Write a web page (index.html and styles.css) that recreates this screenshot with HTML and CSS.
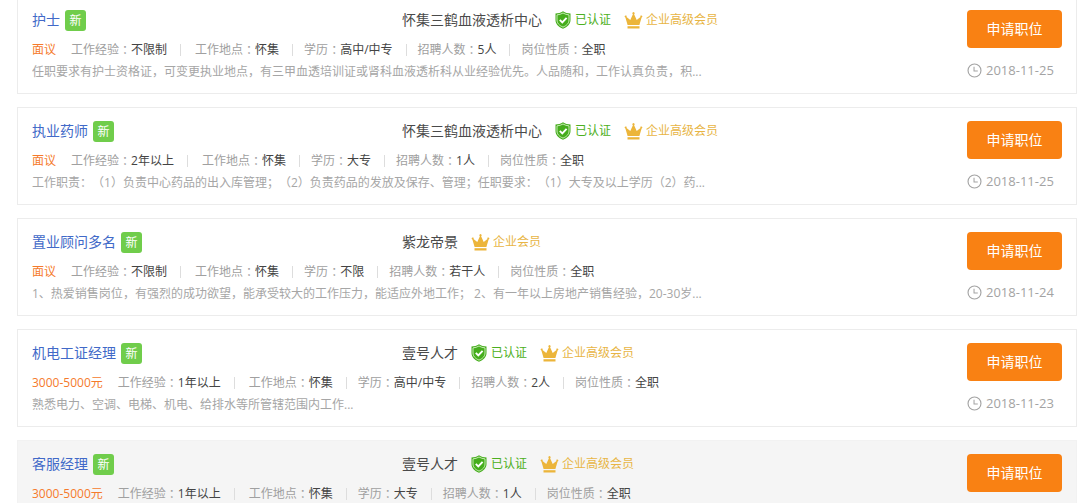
FILE: index.html
```html
<!DOCTYPE html>
<html lang="zh-CN">
<head>
<meta charset="utf-8">
<title>招聘职位</title>
<link rel="stylesheet" href="styles.css">
</head>
<body>
<svg class="sprite" aria-hidden="true">
  <symbol id="shield" viewBox="0 0 16 18">
    <path d="M8 .3C5.800 1.800 3.200 2.500.5 2.600V9c0 4 3 7 7.500 8.700C12.500 16 15.500 13 15.500 9V2.600C12.800 2.500 10.200 1.800 8 .3z" fill="#45ad1c"/>
    <path d="M8 2C6.200 3.100 4.200 3.700 2 3.900V9c0 3.200 2.400 5.600 6 7.100 3.600-1.500 6-3.900 6-7.100V3.900C11.800 3.700 9.800 3.100 8 2z" fill="none" stroke="#d4f0c4" stroke-width=".9"/>
    <path d="M4.800 8.900l2.500 2.500 4.300-4.600" fill="none" stroke="#fff" stroke-width="1.900"/>
  </symbol>
  <symbol id="crown" viewBox="0 0 19 17">
    <path d="M3.600 13L1.400 5.400A1 1 0 1 1 2.500 5L6.300 8 8.900 2.200A1.100 1.100 0 1 1 10.100 2.200L12.700 8l3.800-3a1 1 0 1 1 1.100.4L15.400 13z" fill="#ecb53a"/>
    <path d="M3.500 14.200h12v2.300h-12z" fill="#ecb53a"/>
  </symbol>
  <symbol id="clock" viewBox="0 0 16 16">
    <circle cx="8" cy="8" r="6.900" fill="none" stroke="#a3a3a3" stroke-width="1.200"/>
    <path d="M7.500 4v4.500h4" fill="none" stroke="#a3a3a3" stroke-width="1.100"/>
  </symbol>
</svg>
<main class="jobs">
  <article class="job">
    <div class="job-body">
      <div class="job-head">
        <div class="job-name"><a href="#">护士</a><span class="badge">新</span></div>
        <div class="company"><a href="#">怀集三鹤血液透析中心</a><span class="tag verified"><svg class="shield"><use href="#shield"/></svg>已认证</span><span class="tag member"><svg class="crown"><use href="#crown"/></svg>企业高级会员</span></div>
      </div>
      <ul class="meta">
        <li class="pay">面议</li>
        <li>工作经验<i>：</i><b>不限制</b></li>
        <li>工作地点<i>：</i><b>怀集</b></li>
        <li>学历<i>：</i><b>高中/中专</b></li>
        <li>招聘人数<i>：</i><b>5人</b></li>
        <li>岗位性质<i>：</i><b>全职</b></li>
      </ul>
      <p class="summary">任职要求有护士资格证<i>，</i>可变更执业地点<i>，</i>有三甲血透培训证或肾科血液透析科从业经验优先。人品随和<i>，</i>工作认真负责<i>，</i>积...</p>
    </div>
    <div class="job-side">
      <button class="apply" type="button">申请职位</button>
      <time class="date"><svg class="clock"><use href="#clock"/></svg>2018-11-25</time>
    </div>
  </article>

  <article class="job">
    <div class="job-body">
      <div class="job-head">
        <div class="job-name"><a href="#">执业药师</a><span class="badge">新</span></div>
        <div class="company"><a href="#">怀集三鹤血液透析中心</a><span class="tag verified"><svg class="shield"><use href="#shield"/></svg>已认证</span><span class="tag member"><svg class="crown"><use href="#crown"/></svg>企业高级会员</span></div>
      </div>
      <ul class="meta">
        <li class="pay">面议</li>
        <li>工作经验<i>：</i><b>2年以上</b></li>
        <li>工作地点<i>：</i><b>怀集</b></li>
        <li>学历<i>：</i><b>大专</b></li>
        <li>招聘人数<i>：</i><b>1人</b></li>
        <li>岗位性质<i>：</i><b>全职</b></li>
      </ul>
      <p class="summary">工作职责<i>：</i>（1）负责中心药品的出入库管理<i>；</i>（2）负责药品的发放及保存、管理<i>；</i>任职要求<i>：</i>（1）大专及以上学历（2）药...</p>
    </div>
    <div class="job-side">
      <button class="apply" type="button">申请职位</button>
      <time class="date"><svg class="clock"><use href="#clock"/></svg>2018-11-25</time>
    </div>
  </article>

  <article class="job">
    <div class="job-body">
      <div class="job-head">
        <div class="job-name"><a href="#">置业顾问多名</a><span class="badge">新</span></div>
        <div class="company"><a href="#">紫龙帝景</a><span class="tag member"><svg class="crown"><use href="#crown"/></svg>企业会员</span></div>
      </div>
      <ul class="meta">
        <li class="pay">面议</li>
        <li>工作经验<i>：</i><b>不限制</b></li>
        <li>工作地点<i>：</i><b>怀集</b></li>
        <li>学历<i>：</i><b>不限</b></li>
        <li>招聘人数<i>：</i><b>若干人</b></li>
        <li>岗位性质<i>：</i><b>全职</b></li>
      </ul>
      <p class="summary">1、热爱销售岗位<i>，</i>有强烈的成功欲望<i>，</i>能承受较大的工作压力<i>，</i>能适应外地工作<i>；</i> 2、有一年以上房地产销售经验<i>，</i>20-30岁...</p>
    </div>
    <div class="job-side">
      <button class="apply" type="button">申请职位</button>
      <time class="date"><svg class="clock"><use href="#clock"/></svg>2018-11-24</time>
    </div>
  </article>

  <article class="job">
    <div class="job-body">
      <div class="job-head">
        <div class="job-name"><a href="#">机电工证经理</a><span class="badge">新</span></div>
        <div class="company"><a href="#">壹号人才</a><span class="tag verified"><svg class="shield"><use href="#shield"/></svg>已认证</span><span class="tag member"><svg class="crown"><use href="#crown"/></svg>企业高级会员</span></div>
      </div>
      <ul class="meta">
        <li class="pay">3000-5000元</li>
        <li>工作经验<i>：</i><b>1年以上</b></li>
        <li>工作地点<i>：</i><b>怀集</b></li>
        <li>学历<i>：</i><b>高中/中专</b></li>
        <li>招聘人数<i>：</i><b>2人</b></li>
        <li>岗位性质<i>：</i><b>全职</b></li>
      </ul>
      <p class="summary">熟悉电力、空调、电梯、机电、给排水等所管辖范围内工作...</p>
    </div>
    <div class="job-side">
      <button class="apply" type="button">申请职位</button>
      <time class="date"><svg class="clock"><use href="#clock"/></svg>2018-11-23</time>
    </div>
  </article>

  <article class="job active">
    <div class="job-body">
      <div class="job-head">
        <div class="job-name"><a href="#">客服经理</a><span class="badge">新</span></div>
        <div class="company"><a href="#">壹号人才</a><span class="tag verified"><svg class="shield"><use href="#shield"/></svg>已认证</span><span class="tag member"><svg class="crown"><use href="#crown"/></svg>企业高级会员</span></div>
      </div>
      <ul class="meta">
        <li class="pay">3000-5000元</li>
        <li>工作经验<i>：</i><b>1年以上</b></li>
        <li>工作地点<i>：</i><b>怀集</b></li>
        <li>学历<i>：</i><b>大专</b></li>
        <li>招聘人数<i>：</i><b>1人</b></li>
        <li>岗位性质<i>：</i><b>全职</b></li>
      </ul>
    </div>
    <div class="job-side">
      <button class="apply" type="button">申请职位</button>
    </div>
  </article>
</main>
</body>
</html>
```
FILE: styles.css
```css
* {
  box-sizing: border-box;
}

body {
  margin: 0;
  background: #fff;
  color: #a0a0a0;
  font: 12px/22px "Open Sans", "Noto Sans CJK SC", sans-serif;
}

a {
  text-decoration: none;
}

.sprite {
  display: none;
}

.jobs {
  display: flex;
  flex-direction: column;
  gap: 13px;
  margin: -4px 3px 0 17px;
}

.job {
  display: flex;
  justify-content: space-between;
  padding: 11px 14px 10px;
  border: 1px solid #ececec;
}

.job.active {
  background: #f5f5f5;
  border-color: #f2f2f2;
}

.job-body {
  flex: 1;
  min-width: 0;
}

.job-head {
  display: grid;
  grid-template-columns: 370px 1fr;
  margin-bottom: 7px;
  font-size: 14px;
  line-height: 24px;
}

.job-name,
.company,
.tag,
.meta,
.date {
  display: flex;
  align-items: center;
}

.job-name {
  gap: 5px;
}

.job-name a {
  color: #4169c8;
}

.badge {
  width: 21px;
  height: 21px;
  border-radius: 3px;
  background: #70cd4b;
  color: #fff;
  font-size: 12px;
  line-height: 21px;
  text-align: center;
}

.company {
  gap: 13px;
}

.company a {
  color: #4a4a4a;
}

.tag {
  font-size: 12px;
}

.verified {
  gap: 4px;
  color: #4caf20;
}

.member {
  gap: 3px;
  color: #e8b545;
}

.shield {
  width: 16px;
  height: 18px;
}

.crown {
  width: 19px;
  height: 17px;
}

.meta {
  margin: 0;
  padding: 0;
  list-style: none;
}

.meta li {
  display: flex;
  align-items: center;
}

.meta li:not(.pay, :last-child)::after {
  content: "";
  width: 1px;
  height: 12px;
  margin: 0 11px 0 13px;
  background: #ddd;
}

.meta li:nth-child(2)::after {
  margin-right: 14px;
}

.meta .pay {
  margin-right: 15px;
  color: #f57a2c;
}

.meta b {
  color: #444;
  font-weight: 400;
}

.meta i,
.summary i {
  font-family: "Noto Sans CJK TC", sans-serif;
  font-style: normal;
  line-height: 20px;
}

.summary {
  margin: 0;
  overflow: hidden;
  color: #a6a6a6;
  text-overflow: ellipsis;
  text-spacing-trim: space-all;
  white-space: nowrap;
}

.job-side {
  width: 95px;
  padding-top: 2px;
}

.apply {
  display: block;
  width: 100%;
  height: 38px;
  padding: 0;
  border: 0;
  border-radius: 4px;
  background: #f98113;
  color: #fff;
  font: 14px/38px "Open Sans", "Noto Sans CJK SC", sans-serif;
}

.date {
  gap: 4px;
  margin-top: 11px;
  color: #a3a3a3;
  font-size: 13px;
}

.clock {
  width: 15px;
  height: 15px;
}
```
